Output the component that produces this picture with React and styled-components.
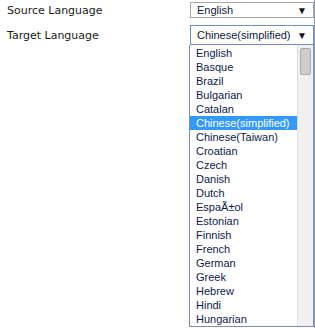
import React from "react";
import styled, { createGlobalStyle } from "styled-components";

const Global = createGlobalStyle`
  html, body { margin: 0; padding: 0; background: #fff; }
  body { width: 315px; height: 328px; overflow: hidden; }
`;

const Page = styled.div`
  position: relative;
  width: 315px;
  height: 328px;
  padding-top: 2px;
  box-sizing: border-box;
  border-right: 1px solid #8d9bb0;
`;

const Row = styled.div`
  display: flex;
  align-items: center;
  height: ${(p) => p.$h}px;
  margin-bottom: ${(p) => p.$mb || 0}px;
  padding-left: 7px;
  position: relative;
`;

const Label = styled.div`
  width: 183px;
  font-family: "DejaVu Sans", Verdana, sans-serif;
  font-size: 11px;
  color: #1a1a1a;
`;

const Select = styled.div`
  display: flex;
  align-items: center;
  justify-content: space-between;
  box-sizing: border-box;
  width: 124px;
  height: ${(p) => p.$h}px;
  padding: 0 6px 0 6px;
  border: 1px solid ${(p) => (p.$focus ? "#6d8fc4" : "#a7a7a7")};
  background: #fff;
  font-family: "Liberation Sans", Arial, sans-serif;
  font-size: 11px;
  color: #0c1a3d;
`;

const Arrow = styled.span`
  font-size: 10px;
  color: #111;
`;

const List = styled.div`
  position: absolute;
  left: 189px;
  top: 45px;
  width: 125px;
  height: 282px;
  box-sizing: border-box;
  border: 1px solid #7f8ea6;
  border-top: none;
  background: #fff;
  display: flex;
`;

const Items = styled.div`
  flex: 1;
  display: flex;
  flex-direction: column;
  padding-top: 1px;
`;

const Item = styled.div`
  height: 14px;
  line-height: 14px;
  padding-left: 6px;
  font-family: "Liberation Sans", Arial, sans-serif;
  font-size: 11px;
  white-space: nowrap;
  color: ${(p) => (p.$sel ? "#fff" : "#0c1a4a")};
  background: ${(p) => (p.$sel ? "#3399ff" : "transparent")};
`;

const Track = styled.div`
  width: 16px;
  background: #f0f0f0;
  border-left: 1px solid #dcdcdc;
  padding: 3px 0 0 2px;
  box-sizing: border-box;
`;

const Thumb = styled.div`
  width: 11px;
  height: 27px;
  box-sizing: border-box;
  border: 1px solid #a8a8a8;
  border-radius: 2px;
  background: #cdcdcd;
`;

const langs = [
  "English", "Basque", "Brazil", "Bulgarian", "Catalan", "Chinese(simplified)",
  "Chinese(Taiwan)", "Croatian", "Czech", "Danish", "Dutch", "EspaÃ±ol",
  "Estonian", "Finnish", "French", "German", "Greek", "Hebrew", "Hindi", "Hungarian",
];

export default function App() {
  return (
    <>
      <Global />
      <Page>
        <Row $h={16} $mb={7}>
          <Label>Source Language</Label>
          <Select $h={16}>
            <span>English</span>
            <Arrow>▼</Arrow>
          </Select>
        </Row>
        <Row $h={20}>
          <Label>Target Language</Label>
          <Select $h={20} $focus>
            <span>Chinese(simplified)</span>
            <Arrow>▼</Arrow>
          </Select>
        </Row>
        <List>
          <Items>
            {langs.map((l) => (
              <Item key={l} $sel={l === "Chinese(simplified)"}>{l}</Item>
            ))}
          </Items>
          <Track>
            <Thumb />
          </Track>
        </List>
      </Page>
    </>
  );
}
